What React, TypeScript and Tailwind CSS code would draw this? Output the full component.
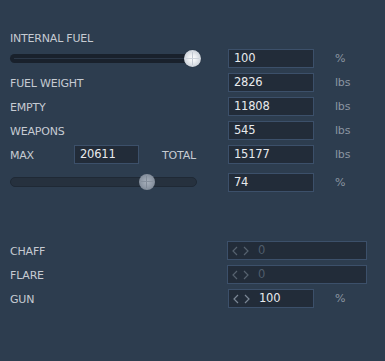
import React from "react";

function Input({ value, w = "w-[86px]", spinner = false, disabled = false }: { value: string; w?: string; spinner?: boolean; disabled?: boolean }) {
  return (
    <div className={`${w} h-[19px] flex items-center bg-[#222c39] border border-[#3c506a] pl-[5px] text-[11.5px] ${disabled ? "text-[#4f5c6b]" : "text-[#e8eaed]"}`}>
      {spinner && (
        <svg width="20" height="10" viewBox="0 0 20 10" className="mr-[6px] ml-[-1px] mt-[1px]">
          <path d="M5 1 L1 5 L5 9" fill="none" stroke={disabled ? "#56626f" : "#7b8795"} strokeWidth="1.2" />
          <path d="M12 1 L16 5 L12 9" fill="none" stroke={disabled ? "#56626f" : "#7b8795"} strokeWidth="1.2" />
        </svg>
      )}
      <span className="pt-[2px]">{value}</span>
    </div>
  );
}

function Unit({ children }: { children: React.ReactNode }) {
  return <span className="ml-[21px] pt-[3px] text-[#8b95a1]">{children}</span>;
}

function Row({ children, className = "" }: { children: React.ReactNode; className?: string }) {
  return <div className={`flex h-[24px] items-center ${className}`}>{children}</div>;
}

function Label({ children, w }: { children: React.ReactNode; w: string }) {
  return <span className={`${w} pt-[4px]`}>{children}</span>;
}

export default function App() {
  return (
    <div className="w-[385px] h-[361px] bg-[#2d3d4f] pt-[28px] pl-[10px] text-[11px] tracking-[-0.2px] font-['DejaVu_Sans',sans-serif] text-[#c6cbd2] overflow-hidden">
      <div className="h-[18px] flex items-center pt-[4px]">INTERNAL FUEL</div>
      <Row>
        <div className="w-[218px] flex items-center">
          <div className="relative w-[190px] h-[9px] rounded-full bg-[#19212c] flex items-center px-[4px]">
            <div className="h-[1px] w-full bg-[#2c3848]" />
            <div className="absolute right-[-1px] top-[-4px] w-[17px] h-[17px] rounded-full bg-[radial-gradient(circle_at_50%_50%,#ffffff_0%,#eef0f3_30%,#ccd2da_70%,#a2abb6_100%)] shadow-[0_0_1px_#0008] overflow-hidden">
              <div className="absolute left-[8px] top-[2px] w-[1px] h-[13px] bg-[#c3c9d2]" />
              <div className="absolute top-[8px] left-[2px] h-[1px] w-[13px] bg-[#cdd3db]" />
            </div>
          </div>
        </div>
        <Input value="100" />
        <Unit>%</Unit>
      </Row>
      <Row>
        <Label w="w-[218px]">FUEL WEIGHT</Label>
        <Input value="2826" />
        <Unit>lbs</Unit>
      </Row>
      <Row>
        <Label w="w-[218px]">EMPTY</Label>
        <Input value="11808" />
        <Unit>lbs</Unit>
      </Row>
      <Row>
        <Label w="w-[218px]">WEAPONS</Label>
        <Input value="545" />
        <Unit>lbs</Unit>
      </Row>
      <Row>
        <Label w="w-[64px]">MAX</Label>
        <Input value="20611" w="w-[65px]" />
        <span className="ml-[23px] w-[66px] pt-[4px]">TOTAL</span>
        <Input value="15177" />
        <Unit>lbs</Unit>
      </Row>
      <Row className="mt-[4px]">
        <div className="w-[218px] flex items-center">
          <div className="relative w-[187px] h-[10px] rounded-full bg-[#26313e] border border-[#1f2935]">
            <div className="absolute left-[128px] top-[-4px] w-[16px] h-[16px] rounded-full bg-[radial-gradient(circle_at_50%_50%,#a9b1bc_0%,#8e98a5_50%,#6f7987_100%)] overflow-hidden">
              <div className="absolute left-[7px] top-[2px] w-[1px] h-[12px] bg-[#808a97]" />
              <div className="absolute top-[7px] left-[2px] h-[1px] w-[12px] bg-[#858f9c]" />
            </div>
          </div>
        </div>
        <Input value="74" />
        <Unit>%</Unit>
      </Row>
      <div className="h-[44px]" />
      <Row>
        <Label w="w-[217px]">CHAFF</Label>
        <Input value="0" w="w-[140px]" spinner disabled />
      </Row>
      <Row>
        <Label w="w-[217px]">FLARE</Label>
        <Input value="0" w="w-[140px]" spinner disabled />
      </Row>
      <Row>
        <Label w="w-[218px]">GUN</Label>
        <Input value="100" spinner />
        <Unit>%</Unit>
      </Row>
    </div>
  );
}
